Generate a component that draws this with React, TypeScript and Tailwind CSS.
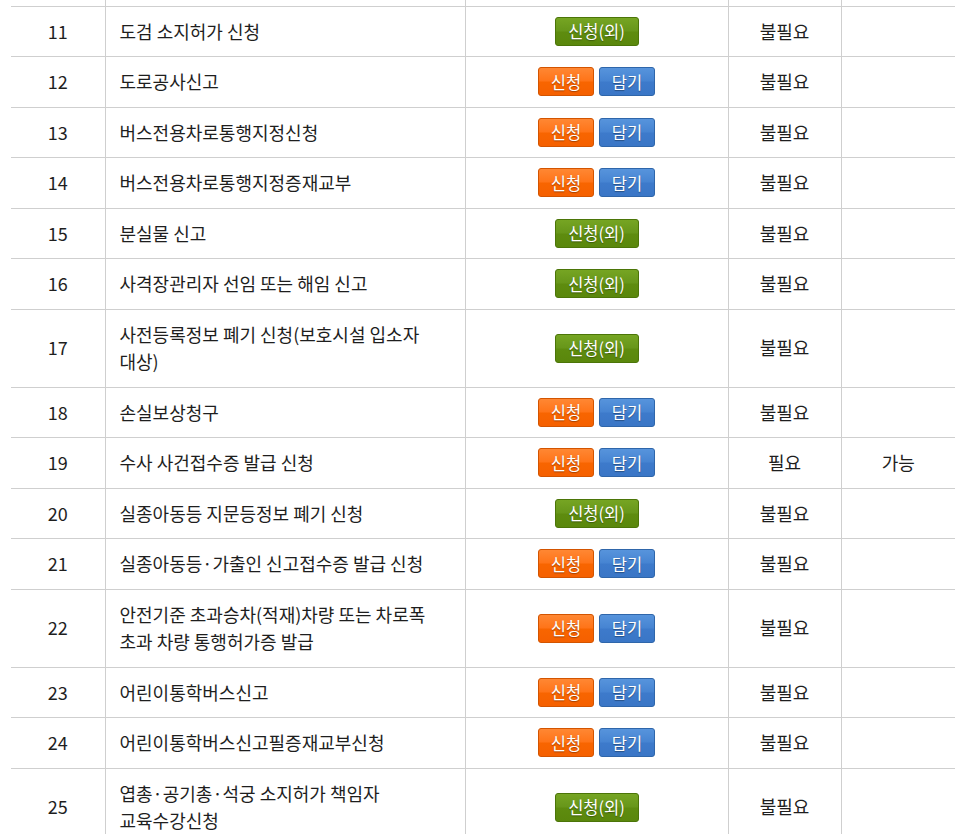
const rows = [
  { no: 11, title: '도검 소지허가 신청', kind: 'ext', need: '불필요', ok: '' },
  { no: 12, title: '도로공사신고', kind: 'cart', need: '불필요', ok: '' },
  { no: 13, title: '버스전용차로통행지정신청', kind: 'cart', need: '불필요', ok: '' },
  { no: 14, title: '버스전용차로통행지정증재교부', kind: 'cart', need: '불필요', ok: '' },
  { no: 15, title: '분실물 신고', kind: 'ext', need: '불필요', ok: '' },
  { no: 16, title: '사격장관리자 선임 또는 해임 신고', kind: 'ext', need: '불필요', ok: '' },
  { no: 17, title: '사전등록정보 폐기 신청(보호시설 입소자 대상)', kind: 'ext', need: '불필요', ok: '' },
  { no: 18, title: '손실보상청구', kind: 'cart', need: '불필요', ok: '' },
  { no: 19, title: '수사 사건접수증 발급 신청', kind: 'cart', need: '필요', ok: '가능' },
  { no: 20, title: '실종아동등 지문등정보 폐기 신청', kind: 'ext', need: '불필요', ok: '' },
  { no: 21, title: '실종아동등·가출인 신고접수증 발급 신청', kind: 'cart', need: '불필요', ok: '' },
  { no: 22, title: '안전기준 초과승차(적재)차량 또는 차로폭 초과 차량 통행허가증 발급', kind: 'cart', need: '불필요', ok: '' },
  { no: 23, title: '어린이통학버스신고', kind: 'cart', need: '불필요', ok: '' },
  { no: 24, title: '어린이통학버스신고필증재교부신청', kind: 'cart', need: '불필요', ok: '' },
  { no: 25, title: '엽총·공기총·석궁 소지허가 책임자 교육수강신청', kind: 'ext', need: '불필요', ok: '' },
];

const btn =
  'flex items-center justify-center h-[29px] rounded-[3px] border text-[16.5px] leading-none text-white [text-shadow:0_1px_1px_rgba(0,0,0,0.35)]';

const Apply = () => (
  <span
    className={`${btn} w-[56px] border-[#d35400] bg-[linear-gradient(to_bottom,#ff8733_0%,#ff7418_48%,#f86500_52%,#f56000_100%)]`}
  >
    신청
  </span>
);

const Cart = () => (
  <span
    className={`${btn} w-[56px] border-[#2f66aa] bg-[linear-gradient(to_bottom,#5794dc_0%,#4684d2_48%,#3d7acb_52%,#3a76c6_100%)]`}
  >
    담기
  </span>
);

const ApplyExt = () => (
  <span
    className={`${btn} w-[84px] border-[#4b7508] bg-[linear-gradient(to_bottom,#76a523_0%,#67961a_48%,#5e8c0f_52%,#5a870c_100%)]`}
  >
    신청(외)
  </span>
);

const cell = 'border-l border-[#cfcfcf] px-[14px] py-[11px] align-middle';

export default function App() {
  return (
    <div className="min-h-screen bg-white pl-[11px] pr-[16px] font-['Noto_Sans_CJK_KR',sans-serif] text-[18px] leading-[27.5px] text-[#1e1e1e]">
      <table className="w-[944px] table-fixed border-collapse">
        <colgroup>
          <col className="w-[94px]" />
          <col className="w-[360px]" />
          <col className="w-[263px]" />
          <col className="w-[113px]" />
          <col className="w-[114px]" />
        </colgroup>
        <tbody>
          <tr className="h-[6px] border-b border-[#cfcfcf]">
            <td className="p-0" />
            <td className="border-l border-[#cfcfcf] p-0" />
            <td className="border-l border-[#cfcfcf] p-0" />
            <td className="border-l border-[#cfcfcf] p-0" />
            <td className="border-l border-[#cfcfcf] p-0" />
          </tr>
          {rows.map((r) => (
            <tr key={r.no} className="border-b border-[#cfcfcf]">
              <td className="px-[14px] py-[11px] text-center align-middle">{r.no}</td>
              <td className={`${cell} break-keep`}>{r.title}</td>
              <td className="border-l border-[#cfcfcf] px-[14px] py-[10px] align-middle">
                <div className="flex justify-center gap-[5px]">
                  {r.kind === 'ext' ? (
                    <ApplyExt />
                  ) : (
                    <>
                      <Apply />
                      <Cart />
                    </>
                  )}
                </div>
              </td>
              <td className={`${cell} text-center`}>{r.need}</td>
              <td className={`${cell} text-center`}>{r.ok}</td>
            </tr>
          ))}
        </tbody>
      </table>
    </div>
  );
}
